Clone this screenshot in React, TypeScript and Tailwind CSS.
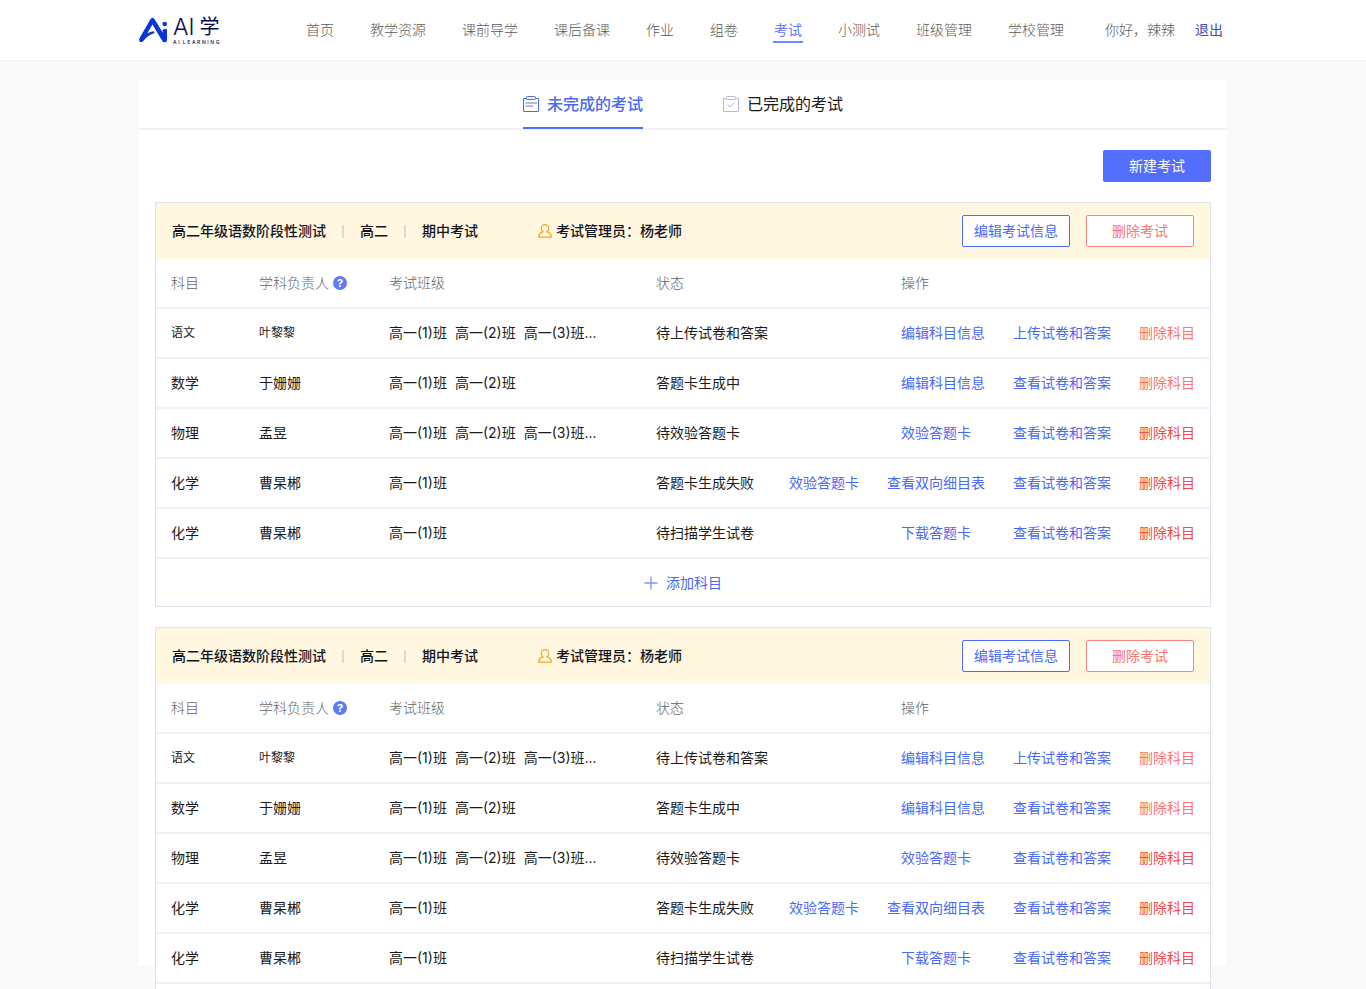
import React from "react";

type Action = { label: string; tone?: "primary" | "soft" | "danger" };
type Row = {
  subject: string;
  owner: string;
  classes: string[];
  status: string;
  actions: Action[];
  compact?: boolean;
};

const NAV = ["首页", "教学资源", "课前导学", "课后备课", "作业", "组卷", "考试", "小测试", "班级管理", "学校管理"];

const ROWS: Row[] = [
  {
    subject: "语文",
    owner: "叶黎黎",
    classes: ["高一(1)班", "高一(2)班", "高一(3)班..."],
    status: "待上传试卷和答案",
    actions: [{ label: "编辑科目信息" }, { label: "上传试卷和答案" }, { label: "删除科目", tone: "soft" }],
    compact: true,
  },
  {
    subject: "数学",
    owner: "于姗姗",
    classes: ["高一(1)班", "高一(2)班"],
    status: "答题卡生成中",
    actions: [{ label: "编辑科目信息" }, { label: "查看试卷和答案" }, { label: "删除科目", tone: "soft" }],
  },
  {
    subject: "物理",
    owner: "孟昱",
    classes: ["高一(1)班", "高一(2)班", "高一(3)班..."],
    status: "待效验答题卡",
    actions: [{ label: "效验答题卡" }, { label: "查看试卷和答案" }, { label: "删除科目", tone: "danger" }],
  },
  {
    subject: "化学",
    owner: "曹杲郴",
    classes: ["高一(1)班"],
    status: "答题卡生成失败",
    actions: [
      { label: "效验答题卡" },
      { label: "查看双向细目表" },
      { label: "查看试卷和答案" },
      { label: "删除科目", tone: "danger" },
    ],
  },
  {
    subject: "化学",
    owner: "曹杲郴",
    classes: ["高一(1)班"],
    status: "待扫描学生试卷",
    actions: [{ label: "下载答题卡" }, { label: "查看试卷和答案" }, { label: "删除科目", tone: "danger" }],
  },
];

const TONES = {
  primary: "text-[#4a69f7]",
  soft: "text-[#fb7670]",
  danger: "text-[#f24a47]",
};

function Logo() {
  return (
    <a href="#" aria-label="AI 学" className="flex items-center gap-[5px]">
      <svg width="29" height="26" viewBox="0 0 29 26" fill="none">
        <path d="M11.400 2.200Q13.500-.8 15.600 2.200L28 22.500Q27.800 25.800 25 25.300Q23.800 25 23 23.600L13.500 7.400L8.200 16.600Q11 14.800 14.600 14.300Q16.200 15.400 14.600 16.600Q9 18.300 4 24.200Q1.800 26 .5 24.200Q-.4 22.800.8 20.800Z" fill="#0a35d6" />
        <path d="M23.800 13.200Q25.800 10.800 28 12.500V23H23.800Z" fill="#0a35d6" />
        <circle cx="25.700" cy="7" r="2.300" fill="#0a35d6" />
      </svg>
      <span className="flex flex-col text-[#0b0b4f]">
        <span className="flex items-center gap-[5px] text-[20px] leading-6 font-normal">
          <span className="text-[23px] font-light">AI</span>学
        </span>
        <span className="flex justify-between text-[5px] leading-[6px] font-medium">
          {"AI LEARNING".split("").map((c, i) => (
            <span key={i}>{c}</span>
          ))}
        </span>
      </span>
    </a>
  );
}

function ClipIcon({ done }: { done?: boolean }) {
  return (
    <svg width="16" height="16" viewBox="0 0 16 16" fill="none" stroke="currentColor" aria-hidden="true">
      <path d="M3.500 2.500H1a.5.5 0 0 0-.5.5v12a.5.5 0 0 0 .5.5h14a.5.5 0 0 0 .5-.5V3a.5.5 0 0 0-.5-.5h-2.500" />
      <rect x="3.500" y="0.500" width="9" height="3" rx="0.800" />
      {done ? (
        <path d="M4.500 8.500 L7 11 L11.500 6.300" />
      ) : (
        <path d="M2.500 7H14M2.500 10h7.500" strokeWidth="1.600" strokeOpacity="0.600" />
      )}
    </svg>
  );
}

function UserIcon() {
  return (
    <svg width="14" height="14" viewBox="0 0 14 14" fill="none" stroke="#fba61c" strokeWidth="1.200" strokeLinejoin="round" aria-hidden="true">
      <path d="M5.200 7.800C4 7 3.300 5.800 3.300 4.400a3.700 3.700 0 0 1 7.400 0c0 1.400-.7 2.600-1.900 3.400 2.600.4 4.300 2.100 4.600 5.400H.6C.9 9.900 2.600 8.200 5.200 7.800Z" />
    </svg>
  );
}

function HelpIcon() {
  return (
    <button
      type="button"
      aria-label="学科负责人说明"
      className="flex size-[14px] items-center justify-center rounded-full bg-[#5f79fb] text-[11px] leading-none font-bold text-white"
    >
      ?
    </button>
  );
}

function ExamCard() {
  return (
    <section className="border border-[#dfe1ee] bg-white">
      <header className="flex h-14 items-center bg-[#fff7df] px-4 text-sm">
        <div className="flex items-center gap-4 font-medium text-[#11131f]">
          <h2>高二年级语数阶段性测试</h2>
          <i className="h-[13px] w-[2px] bg-[#dddbd2]" />
          <span>高二</span>
          <i className="h-[13px] w-[2px] bg-[#dddbd2]" />
          <span>期中考试</span>
        </div>
        <div className="ml-[60px] flex items-center gap-1 font-medium text-[#11131f]">
          <UserIcon />
          考试管理员：杨老师
        </div>
        <div className="ml-auto flex gap-4">
          <button type="button" className="h-8 w-[108px] rounded-xs border border-[#4e6dfb] bg-white text-[#4a69f7]">
            编辑考试信息
          </button>
          <button type="button" className="h-8 w-[108px] rounded-xs border border-[#fc8480] bg-white text-[#fb7670]">
            删除考试
          </button>
        </div>
      </header>
      <table className="w-full table-fixed border-separate border-spacing-0 text-left text-sm text-[#1a1a1a] [&_td]:border-b-2 [&_td]:border-[#f0f0f7] [&_th]:border-b-2 [&_th]:border-[#f0f0f7]">
        <colgroup>
          <col className="w-[103px]" />
          <col className="w-[130px]" />
          <col className="w-[267px]" />
          <col className="w-[117px]" />
          <col />
        </colgroup>
        <thead>
          <tr className="h-[50px] text-[#666666]">
            <th className="p-0 pl-[15px] font-light">科目</th>
            <th className="p-0 font-light">
              <span className="flex items-center gap-1">
                学科负责人
                <HelpIcon />
              </span>
            </th>
            <th className="p-0 font-light">考试班级</th>
            <th className="p-0 font-light">状态</th>
            <th className="p-0 pr-[15px] font-light">
              <span className="ml-auto block w-[294px]">操作</span>
            </th>
          </tr>
        </thead>
        <tbody>
          {ROWS.map((row, i) => (
            <tr key={i} className="h-[50px]">
              <td className={row.compact ? "p-0 pl-[15px] text-xs" : "p-0 pl-[15px]"}>{row.subject}</td>
              <td className={row.compact ? "p-0 text-xs" : "p-0"}>{row.owner}</td>
              <td className="p-0">
                <span className="flex gap-2">
                  {row.classes.map((c) => (
                    <span key={c}>{c}</span>
                  ))}
                </span>
              </td>
              <td className="p-0 whitespace-nowrap">{row.status}</td>
              <td className="p-0 pr-[15px]">
                <span className="flex justify-end gap-7 whitespace-nowrap">
                  {row.actions.map((a, j) => (
                    <a
                      key={a.label}
                      href="#"
                      className={`${TONES[a.tone ?? "primary"]} ${j === 0 && row.actions.length === 3 ? "w-[84px]" : ""}`}
                    >
                      {a.label}
                    </a>
                  ))}
                </span>
              </td>
            </tr>
          ))}
        </tbody>
      </table>
      <button type="button" className="flex h-[47px] w-full items-center justify-center gap-2 text-sm text-[#4a69f7]">
        <svg width="14" height="14" viewBox="0 0 14 14" stroke="#7f95fc" aria-hidden="true">
          <path d="M7 .5v13M.5 7h13" strokeWidth="1.300" />
        </svg>
        添加科目
      </button>
    </section>
  );
}

export default function App() {
  return (
    <div className="h-screen overflow-y-auto bg-[#f9f9f9] font-['Inter','Noto_Sans_CJK_SC',sans-serif] [scrollbar-width:none]">
      <header className="bg-white shadow-[0_1px_2px_rgba(0,0,0,0.04)]">
        <div className="mx-auto flex h-[60px] max-w-[1088px] items-center justify-between pr-1 text-sm font-light text-[#5a5a5a]">
          <Logo />
          <div className="flex items-center">
            <nav className="flex gap-9">
              {NAV.map((item) =>
                item === "考试" ? (
                  <a key={item} href="#" aria-current="page" className="relative font-normal text-[#5f7bfc]">
                    {item}
                    <i className="absolute -inset-x-px -bottom-[3px] h-[2px] bg-[#6f88fd]" />
                  </a>
                ) : (
                  <a key={item} href="#">
                    {item}
                  </a>
                ),
              )}
            </nav>
            <span className="ml-[41px]">你好，辣辣</span>
            <a href="#" className="ml-5 font-normal text-[#3f51b0]">
              退出
            </a>
          </div>
        </div>
      </header>
      <main className="mx-auto mt-5 h-[calc(100vh-103px)] max-w-[1088px] bg-white">
        <div role="tablist" className="flex h-[50px] justify-center gap-20 border-b-2 border-[#f3f3f5] text-base">
          <button
            type="button"
            role="tab"
            aria-selected="true"
            className="relative flex items-center gap-2 font-medium text-[#4a69f7]"
          >
            <ClipIcon />
            未完成的考试
            <i className="absolute inset-x-0 -bottom-px h-[2px] bg-[#4e6dfb]" />
          </button>
          <button type="button" role="tab" aria-selected="false" className="flex items-center gap-2 text-[#1a1a1a]">
            <span className="text-[#b4badf]">
              <ClipIcon done />
            </span>
            已完成的考试
          </button>
        </div>
        <div className="flex flex-col gap-5 px-4 py-5">
          <button type="button" className="h-8 w-[108px] self-end rounded-xs bg-[#536dfe] text-sm text-white">
            新建考试
          </button>
          <ExamCard />
          <ExamCard />
        </div>
      </main>
    </div>
  );
}
